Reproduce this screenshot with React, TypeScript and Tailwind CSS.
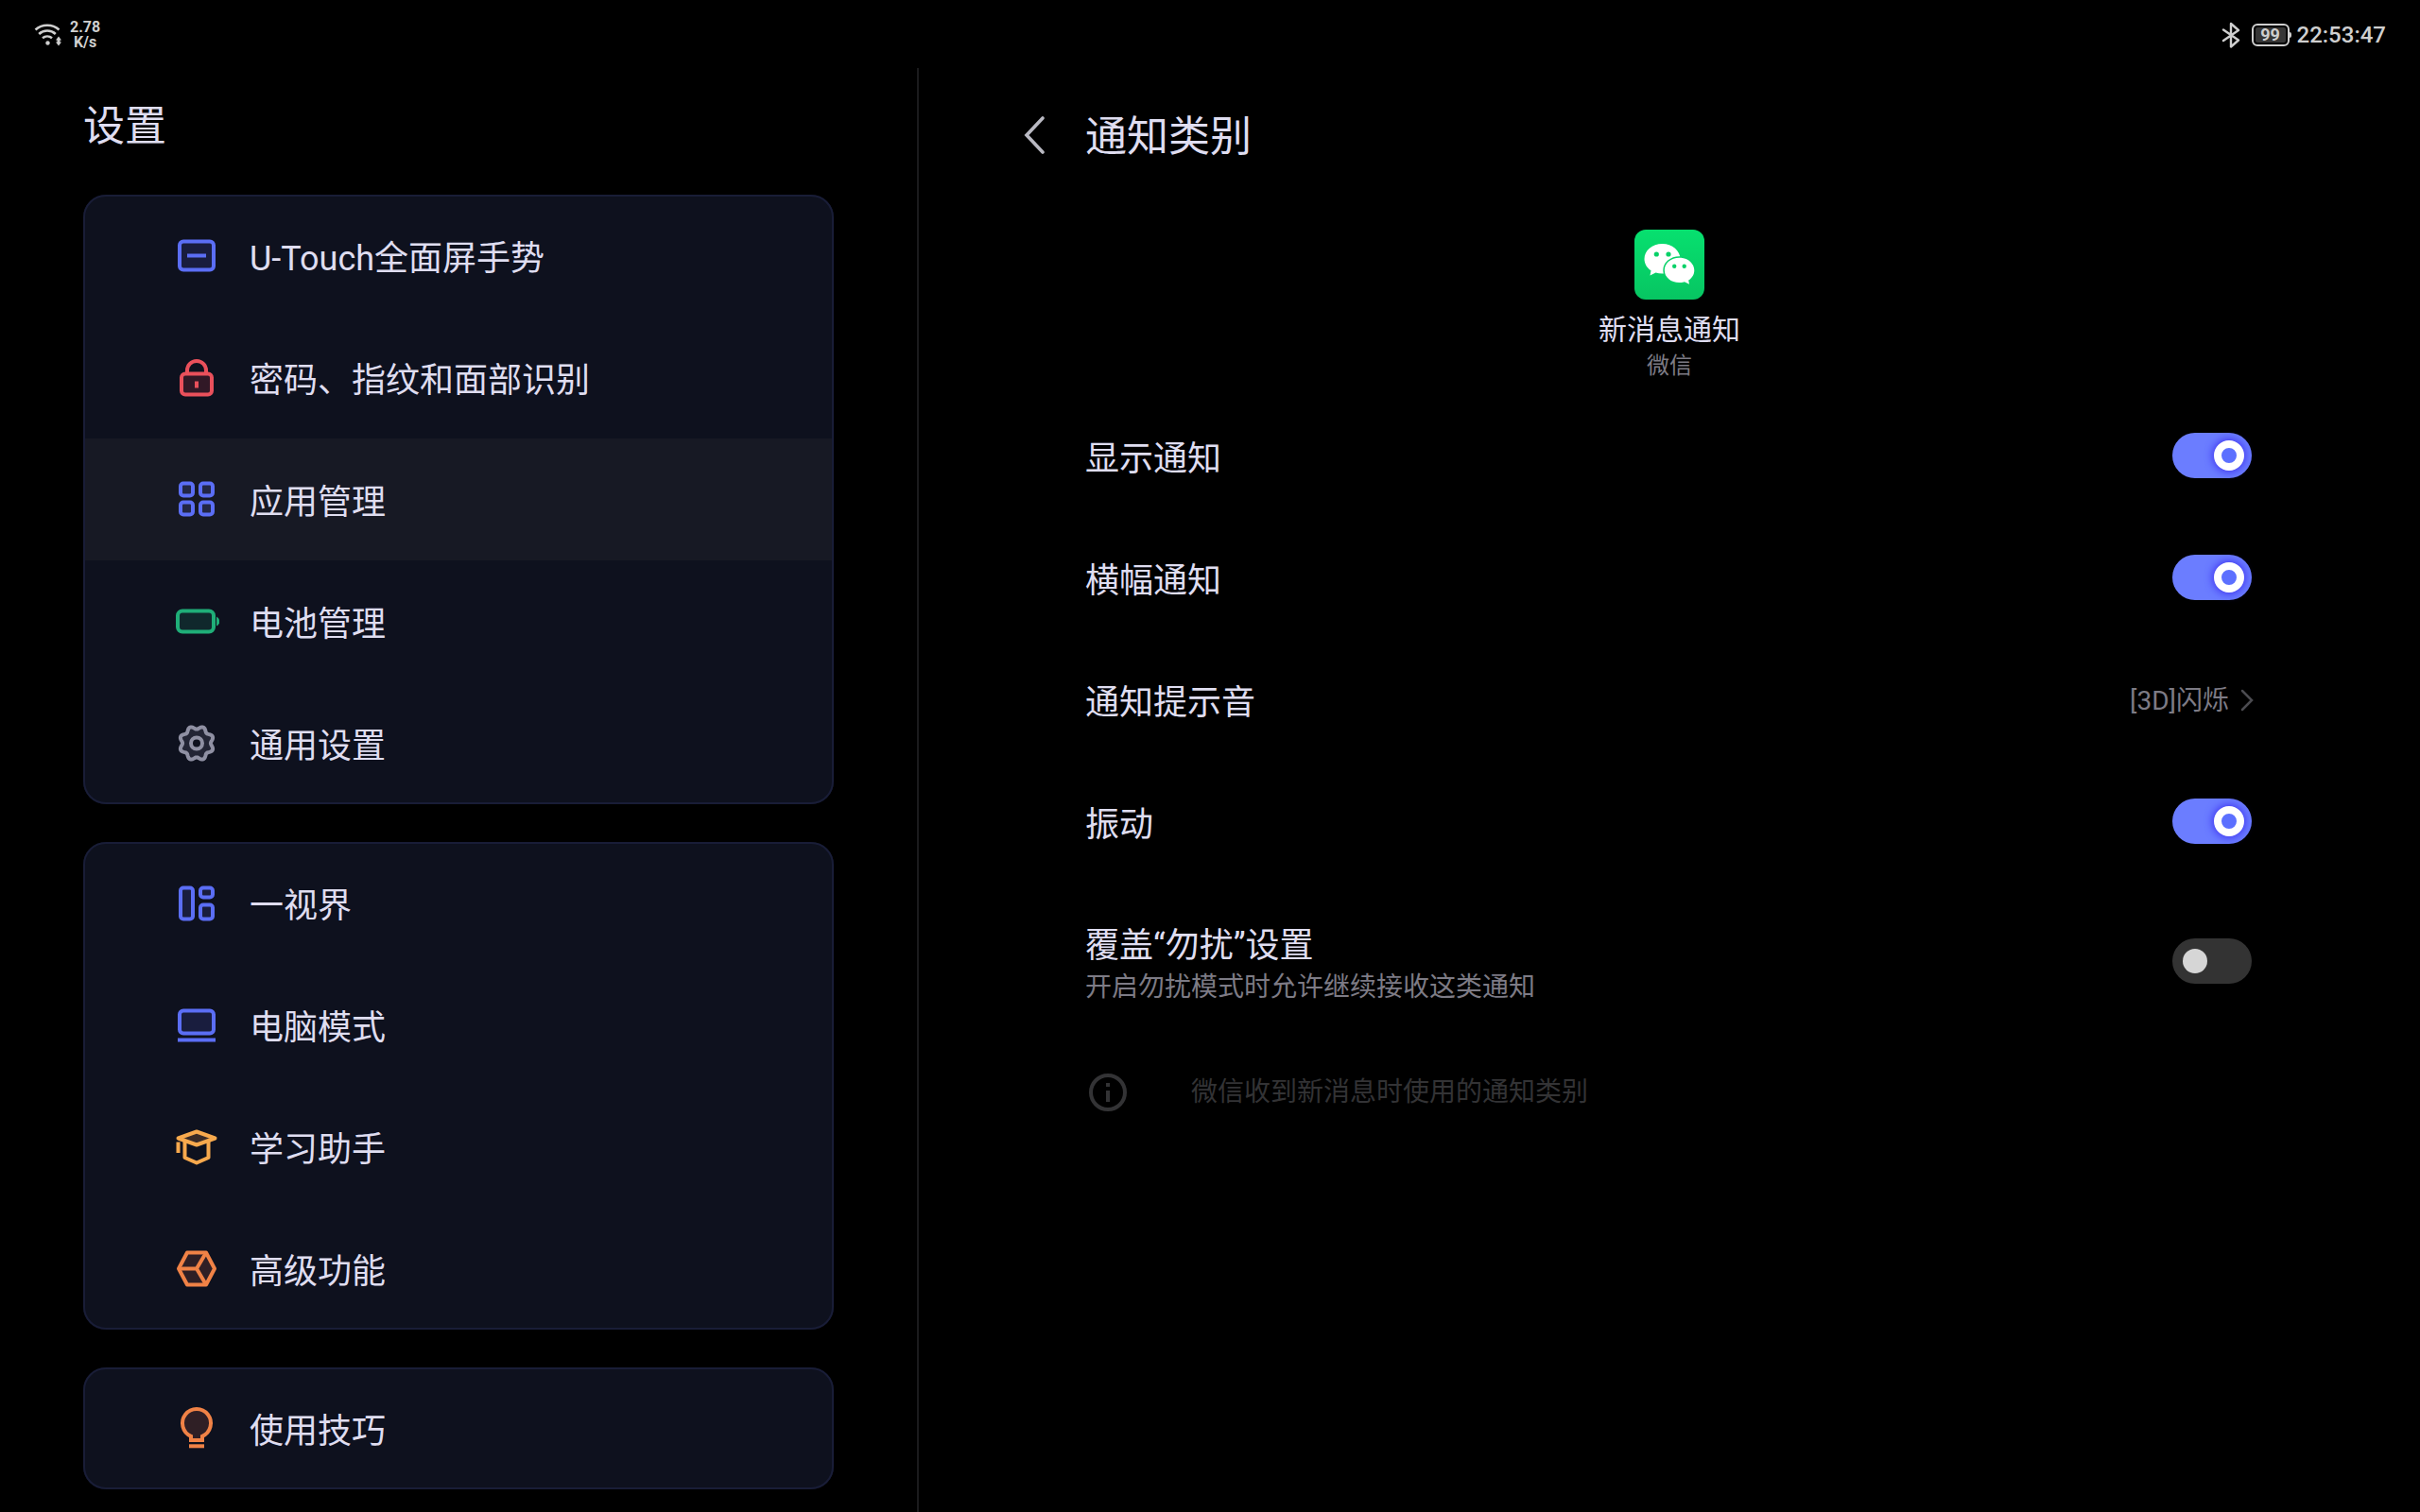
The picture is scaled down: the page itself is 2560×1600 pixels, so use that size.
import React, { useState } from "react";

type IconProps = { children: React.ReactNode; color: string; fill: string };

function Glyph({ children, color, fill }: IconProps) {
  return (
    <svg viewBox="0 0 48 48" className="size-12 shrink-0" stroke={color} fill={fill} strokeWidth={4} aria-hidden="true">
      {children}
    </svg>
  );
}

const BLUE = "#5b6ef5";
const BLUE_FILL = "#191d3e";
const ORANGE = "#f08246";

const GestureIcon = () => (
  <Glyph color={BLUE} fill={BLUE_FILL}>
    <rect x="6" y="8.500" width="36" height="30" rx="4" />
    <path d="M14 23.500h20" />
  </Glyph>
);

const LockIcon = () => (
  <Glyph color="#e9505b" fill="#311826">
    <path d="M14 18v-2a10 10 0 0 1 20 0v2" fill="none" />
    <rect x="8" y="19.500" width="32" height="22" rx="4" />
    <path d="M24 27.500v7" />
  </Glyph>
);

const AppsIcon = () => (
  <Glyph color={BLUE} fill="#232745">
    <rect x="7" y="6.500" width="13" height="13" rx="3" />
    <rect x="28" y="6.500" width="13" height="13" rx="3" />
    <rect x="7" y="26.500" width="13" height="13" rx="3" />
    <rect x="28" y="26.500" width="13" height="13" rx="3" />
  </Glyph>
);

const BatteryIcon = () => (
  <Glyph color="#1fae78" fill="#10282c">
    <rect x="4" y="12.500" width="38" height="22" rx="5" />
    <path d="M45 18.500a5.500 5.500 0 0 1 0 10z" fill="#1fae78" stroke="none" />
  </Glyph>
);

const GEAR_PATH = (() => {
  const points: string[] = [];
  for (let i = 0; i <= 144; i += 1) {
    const angle = (i / 144) * Math.PI * 2;
    const radius = 16.6 - 1.7 * Math.cos(angle * 8);
    points.push(`${(24 + radius * Math.cos(angle)).toFixed(2)} ${(23.5 + radius * Math.sin(angle)).toFixed(2)}`);
  }
  return `M${points.join("L")}Z`;
})();

const GearIcon = () => (
  <Glyph color="#8f90a3" fill="#232535">
    <path d={GEAR_PATH} strokeLinejoin="round" />
    <circle cx="24" cy="23.500" r="6" fill="#0e111e" />
  </Glyph>
);

const PanesIcon = () => (
  <Glyph color={BLUE} fill={BLUE_FILL}>
    <rect x="7" y="7.500" width="13" height="33" rx="3" />
    <rect x="28" y="7.500" width="13" height="10" rx="3" />
    <rect x="28" y="25.500" width="13" height="15" rx="3" />
  </Glyph>
);

const LaptopIcon = () => (
  <Glyph color={BLUE} fill={BLUE_FILL}>
    <rect x="6" y="8.500" width="36" height="24" rx="4" />
    <path d="M4 39.500h40" />
  </Glyph>
);

const StudyIcon = () => (
  <Glyph color="#f7a94d" fill="none">
    <path d="M11.500 17v18L24 40.500 36.500 35V17" strokeLinejoin="round" />
    <path d="M4.500 14.500L24 7.500l19.500 7L24 21.500z" fill="#3a2b27" strokeLinejoin="round" />
    <path d="M4.500 18.500v11.500" />
  </Glyph>
);

const CubeIcon = () => (
  <Glyph color={ORANGE} fill="#2f1f25">
    <path d="M14 6.500h20l9 17-9 17H14l-9-17z" strokeLinejoin="round" />
    <path d="M5 23.500h19l10-17M24 23.500l10 17" />
  </Glyph>
);

const BulbIcon = () => (
  <Glyph color={ORANGE} fill="#2f1f25">
    <path d="M18 36v-4.200a15 15 0 1 1 12 0V36z" />
    <path d="M16 42.300h16" />
  </Glyph>
);

type Item = { label: string; icon: React.FC };

const GROUPS: Item[][] = [
  [
    { label: "U-Touch全面屏手势", icon: GestureIcon },
    { label: "密码、指纹和面部识别", icon: LockIcon },
    { label: "应用管理", icon: AppsIcon },
    { label: "电池管理", icon: BatteryIcon },
    { label: "通用设置", icon: GearIcon },
  ],
  [
    { label: "一视界", icon: PanesIcon },
    { label: "电脑模式", icon: LaptopIcon },
    { label: "学习助手", icon: StudyIcon },
    { label: "高级功能", icon: CubeIcon },
  ],
  [{ label: "使用技巧", icon: BulbIcon }],
];

function StatusBar() {
  return (
    <header className="flex h-[72px] items-center justify-between px-9 text-[#cfcfcf]">
      <div className="flex items-center gap-2 pt-0.5">
        <svg viewBox="0 0 30 24" className="h-6 w-[30px]" fill="none" stroke="currentColor" strokeWidth={2.6} aria-hidden="true">
          <path d="M1.500 6.500a19 19 0 0 1 25 0M5.200 11a13 13 0 0 1 17.600 0M9 15.200a8 8 0 0 1 10 0" />
          <circle cx="14.500" cy="20.500" r="2.200" fill="currentColor" stroke="none" />
          <path d="M26 13.500l3 4h-1.500v2H29l-3 4-3-4h1.500v-2H23z" fill="currentColor" stroke="none" />
        </svg>
        <p className="text-center text-base leading-4 font-bold">
          2.78
          <br />
          K/s
        </p>
      </div>
      <div className="flex items-center pt-0.5">
        <svg viewBox="0 0 20 28" className="h-7 w-5" fill="none" stroke="currentColor" strokeWidth={2.4} strokeLinejoin="round" strokeLinecap="round" aria-hidden="true">
          <path d="M2 8.500l16 11-8 7V2l8 7-16 11" />
        </svg>
        <div className="ml-3 flex h-6 w-10 items-center justify-center rounded-md border-2 border-current p-0.5">
          <span className="flex h-4 w-8 items-center justify-center rounded-xs bg-[#363636] text-lg leading-4 font-bold">99</span>
        </div>
        <span className="mr-1.5 h-1.5 w-0.5 rounded-r-sm bg-current" />
        <time className="text-2xl leading-8 font-medium">22:53:47</time>
      </div>
    </header>
  );
}

function Sidebar() {
  return (
    <aside className="px-[88px] pb-6">
      <h1 className="mb-10 pt-[30px] text-[44px] leading-[64px]">设置</h1>
      <nav className="flex flex-col gap-10">
        {GROUPS.map((group) => (
          <ul key={group[0].label} className="overflow-hidden rounded-3xl bg-[#0e111e] outline-2 -outline-offset-2 outline-[#191d37]">
            {group.map(({ label, icon: Icon }) => (
              <li key={label}>
                <button
                  type="button"
                  aria-current={label === "应用管理" ? "page" : undefined}
                  className="flex h-[129px] w-full items-center gap-8 pl-24 text-left text-4xl leading-[52px] aria-[current=page]:bg-[#171924]"
                >
                  <Icon />
                  <span className="pt-1.5">{label}</span>
                </button>
              </li>
            ))}
          </ul>
        ))}
      </nav>
    </aside>
  );
}

function Toggle({ label, initial }: { label: string; initial: boolean }) {
  const [on, setOn] = useState(initial);
  return (
    <span className="relative flex h-12 w-[84px] shrink-0">
      <input
        type="checkbox"
        role="switch"
        aria-label={label}
        checked={on}
        onChange={() => setOn(!on)}
        className="peer h-full w-full appearance-none rounded-full bg-[#333333] checked:bg-[#6b7dff]"
      />
      <span className="pointer-events-none absolute top-[11px] left-[11px] size-[26px] rounded-full bg-[#d6d6d6] peer-checked:top-2 peer-checked:left-11 peer-checked:size-8 peer-checked:border-8 peer-checked:border-white peer-checked:bg-[#5c70ff] peer-checked:shadow-[0_0_10px_1px_#3a2cf0]" />
    </span>
  );
}

function ToggleRow({ label, hint, initial }: { label: string; hint?: string; initial: boolean }) {
  return (
    <li className={hint ? "flex h-[167px] items-center justify-between" : "flex h-[129px] items-center justify-between"}>
      <div className="pt-2">
        <p className="text-4xl leading-[48px]">{label}</p>
        {hint && <p className="text-[28px] leading-10 text-[#7d7b85]">{hint}</p>}
      </div>
      <Toggle label={label} initial={initial} />
    </li>
  );
}

function WeChatLogo() {
  return (
    <svg viewBox="0 0 74 74" className="size-[74px]" role="img" aria-label="微信">
      <defs>
        <linearGradient id="wechat" x1="0" y1="0" x2="0" y2="1">
          <stop offset="0" stopColor="#07e06f" />
          <stop offset="1" stopColor="#07c562" />
        </linearGradient>
      </defs>
      <rect width="74" height="74" rx="12" fill="url(#wechat)" />
      <path d="M29.500 15C18.700 15 10.500 22.200 10.500 31c0 5 2.700 9.400 7 12.300l-1 5.200 6-3c2.200.7 4.500 1 7 1 10.500 0 19-7 19-15.500S40 15 29.500 15z" fill="#fff" />
      <ellipse cx="47.500" cy="43" rx="17.200" ry="14.700" fill="#07d168" />
      <path d="M47.500 29.700c-8.800 0-15.700 5.900-15.700 13.200S38.700 56 47.500 56c2 0 3.800-.3 5.500-.8l5 2.600-.8-4.300c3.800-2.400 6.100-6.200 6.100-10.600 0-7.300-7-13.200-15.800-13.200z" fill="#fff" />
      <g fill="#07d168">
        <circle cx="23.300" cy="26" r="2.600" />
        <circle cx="36" cy="26" r="2.600" />
        <circle cx="42.200" cy="38.700" r="2.200" />
        <circle cx="52.700" cy="38.700" r="2.200" />
      </g>
    </svg>
  );
}

function Detail() {
  return (
    <main className="border-l-2 border-[#1b1b1d] pr-[178px] pl-[108px]">
      <div className="flex items-center gap-10 pt-10">
        <button type="button" aria-label="返回" className="flex h-16 w-7 items-start justify-center pt-2.5">
          <svg viewBox="0 0 24 40" className="h-10 w-6" fill="none" stroke="#b9b9c2" strokeWidth={3.6} strokeLinecap="round" aria-hidden="true">
            <path d="M21 2L4 20l17 18" />
          </svg>
        </button>
        <h2 className="text-[44px] leading-[66px]">通知类别</h2>
      </div>
      <section className="-mr-[70px] flex flex-col items-center pt-[65px]">
        <WeChatLogo />
        <p className="mt-3 text-3xl leading-10">新消息通知</p>
        <p className="text-2xl leading-9 text-[#7d7b85]">微信</p>
      </section>
      <ul className="mt-3 pl-[68px]">
        <ToggleRow label="显示通知" initial />
        <ToggleRow label="横幅通知" initial />
        <li>
          <button type="button" className="flex h-[129px] w-full items-center justify-between text-left">
            <span className="pt-2 text-4xl leading-[48px]">通知提示音</span>
            <span className="-mr-0.5 flex items-center gap-3 pt-0.5 text-[28px] leading-10 text-[#7d7b85]">
              <span className="pt-0.5">[3D]闪烁</span>
              <svg viewBox="0 0 14 24" className="h-6 w-3.5" fill="none" stroke="#4b4b50" strokeWidth={2.5} strokeLinecap="round" aria-hidden="true">
                <path d="M2 2l10 10L2 22" />
              </svg>
            </span>
          </button>
        </li>
        <ToggleRow label="振动" initial />
        <ToggleRow label="覆盖“勿扰”设置" hint="开启勿扰模式时允许继续接收这类通知" initial={false} />
      </ul>
      <div className="mt-9 flex items-center gap-[68px] pl-[72px] text-[#333335]">
        <svg viewBox="0 0 40 40" className="size-10" fill="none" stroke="currentColor" strokeWidth={4} aria-hidden="true">
          <circle cx="20" cy="20" r="18" />
          <path d="M20 18v12M20 10v4" />
        </svg>
        <p className="text-[28px] leading-10">微信收到新消息时使用的通知类别</p>
      </div>
    </main>
  );
}

export default function App() {
  return (
    <div className="flex min-h-screen flex-col bg-black font-['Roboto','Noto_Sans_CJK_SC',sans-serif] text-[#dfddf0]">
      <StatusBar />
      <div className="grid grow grid-cols-[61fr_100fr]">
        <Sidebar />
        <Detail />
      </div>
    </div>
  );
}
